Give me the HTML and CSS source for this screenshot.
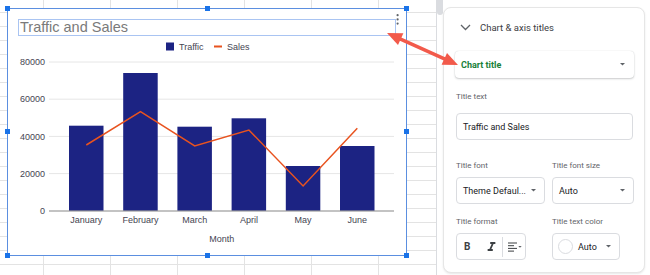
FILE: index.html
```html
<!DOCTYPE html>
<html lang="en">
<head>
    <meta charset="UTF-8">
    <title>Chart editor</title>
    <link rel="stylesheet" href="styles.css">
</head>
<body>
    <div class="sheet">
        <div class="chart">
            <svg class="plot" viewBox="8 9 398 246" width="398" height="246">
                <rect class="title-box" x="18.5" y="19.5" width="377" height="16"/>
                <text class="title" x="20" y="32">Traffic and Sales</text>
                <circle class="dot" cx="397.6" cy="15.2" r="1.1"/>
                <circle class="dot" cx="397.6" cy="19.4" r="1.1"/>
                <circle class="dot" cx="397.6" cy="23.6" r="1.1"/>

                <rect class="bar" x="166" y="42.5" width="8" height="8"/>
                <text class="lbl" x="179" y="50">Traffic</text>
                <rect class="sales-key" x="214" y="45.5" width="8" height="2"/>
                <text class="lbl" x="227" y="50">Sales</text>

                <line class="grid" x1="49" y1="62" x2="394" y2="62"/>
                <line class="grid" x1="49" y1="99.2" x2="394" y2="99.2"/>
                <line class="grid" x1="49" y1="136.4" x2="394" y2="136.4"/>
                <line class="grid" x1="49" y1="173.6" x2="394" y2="173.6"/>

                <text class="lbl end" x="45" y="65.2">80000</text>
                <text class="lbl end" x="45" y="102.4">60000</text>
                <text class="lbl end" x="45" y="139.6">40000</text>
                <text class="lbl end" x="45" y="176.8">20000</text>
                <text class="lbl end" x="45" y="214">0</text>

                <rect class="bar" x="69" y="125.7" width="34.5" height="85.1"/>
                <rect class="bar" x="123.2" y="73" width="34.5" height="137.8"/>
                <rect class="bar" x="177.4" y="126.7" width="34.5" height="84.1"/>
                <rect class="bar" x="231.6" y="118.3" width="34.5" height="92.5"/>
                <rect class="bar" x="285.8" y="166" width="34.5" height="44.8"/>
                <rect class="bar" x="340" y="146" width="34.5" height="64.8"/>

                <line class="axis" x1="49" y1="211" x2="394" y2="211"/>

                <polyline class="sales" points="86.3,145 140.5,111.7 194.7,146 248.9,130 303.1,186 357.3,128.3"/>

                <text class="lbl mid" x="86.3" y="222.5">January</text>
                <text class="lbl mid" x="140.5" y="222.5">February</text>
                <text class="lbl mid" x="194.7" y="222.5">March</text>
                <text class="lbl mid" x="248.9" y="222.5">April</text>
                <text class="lbl mid" x="303.1" y="222.5">May</text>
                <text class="lbl mid" x="357.3" y="222.5">June</text>
                <text class="lbl mid" x="221.7" y="242">Month</text>
            </svg>
            <span class="handle h-top h-left"></span>
            <span class="handle h-top h-center"></span>
            <span class="handle h-top h-right"></span>
            <span class="handle h-middle h-left"></span>
            <span class="handle h-middle h-right"></span>
            <span class="handle h-bottom h-left"></span>
            <span class="handle h-bottom h-center"></span>
            <span class="handle h-bottom h-right"></span>
        </div>
    </div>

    <div class="sidebar">
        <div class="scroll-track"><div class="scroll-thumb"></div></div>
        <div class="card">
            <div class="section-head">
                <svg class="chevron" width="11" height="7" viewBox="0 0 11 7"><path d="M1 1 L5.5 5.5 L10 1"/></svg>
                <span>Chart &amp; axis titles</span>
            </div>

            <div class="select select-main">
                <span class="green">Chart title</span>
                <svg class="caret" width="5" height="3" viewBox="0 0 5 3"><polygon points="0,0 5,0 2.5,2.6"/></svg>
            </div>

            <div class="label label-first">Title text</div>
            <div class="field">Traffic and Sales</div>

            <div class="row row-font">
                <div class="col col-left">
                    <div class="label">Title font</div>
                    <div class="select">
                        <span>Theme Defaul...</span>
                        <svg class="caret" width="5" height="3" viewBox="0 0 5 3"><polygon points="0,0 5,0 2.5,2.6"/></svg>
                    </div>
                </div>
                <div class="col col-right">
                    <div class="label">Title font size</div>
                    <div class="select">
                        <span>Auto</span>
                        <svg class="caret" width="5" height="3" viewBox="0 0 5 3"><polygon points="0,0 5,0 2.5,2.6"/></svg>
                    </div>
                </div>
            </div>

            <div class="row row-format">
                <div class="col col-left">
                    <div class="label">Title format</div>
                    <div class="format-box">
                        <span class="bold-btn">B</span>
                        <svg class="italic-btn" width="9" height="9" viewBox="6 4 12 14"><path d="M10 4v3h2.21l-3.42 8H6v3h8v-3h-2.21l3.42-8H18V4z"/></svg>
                        <span class="sep"></span>
                        <svg class="align-btn" width="9" height="10" viewBox="0 0 9 10">
                            <rect x="0" y="0.5" width="9" height="1"/>
                            <rect x="0" y="3.2" width="6" height="1"/>
                            <rect x="0" y="5.9" width="9" height="1"/>
                            <rect x="0" y="8.6" width="6" height="1"/>
                        </svg>
                        <svg class="caret small" width="4" height="2" viewBox="0 0 5 3"><polygon points="0,0 5,0 2.5,2.6"/></svg>
                    </div>
                </div>
                <div class="col col-right">
                    <div class="label">Title text color</div>
                    <div class="color-box">
                        <span class="swatch"></span>
                        <span class="color-name">Auto</span>
                        <svg class="caret" width="5" height="3" viewBox="0 0 5 3"><polygon points="0,0 5,0 2.5,2.6"/></svg>
                    </div>
                </div>
            </div>
        </div>
    </div>

    <svg class="arrow" width="650" height="275" viewBox="0 0 650 275">
        <line x1="400" y1="38.9" x2="445" y2="59.1"/>
        <polygon points="387,33 398,45.1 403.4,33.3"/>
        <polygon points="458,65 441.6,64.7 447,52.9"/>
    </svg>
</body>
</html>
```

FILE: styles.css
```css
* {
    box-sizing: border-box;
}

body {
    margin: 0;
    width: 650px;
    height: 275px;
    overflow: hidden;
    display: flex;
    position: relative;
    background: #fff;
    font-family: Roboto, "Liberation Sans", sans-serif;
}

/* spreadsheet grid behind the chart */
.sheet {
    width: 437px;
    height: 275px;
    flex-shrink: 0;
    padding: 8px 0 0 7px;
    border-right: 1px solid #dadce0;
    background-color: #fff;
    background-image:
        linear-gradient(to right, #e3e3e3 1px, transparent 1px),
        linear-gradient(to bottom, #e3e3e3 1px, transparent 1px);
    background-size: 67px 100%, 100% 14px;
    background-position: 43px 0, 0 12px;
}

.chart {
    position: relative;
    width: 400px;
    height: 248px;
    border: 1px solid #5b8fe0;
    background: #fff;
}

.plot {
    display: block;
    font-family: "Liberation Sans", Arial, sans-serif;
}

.title-box {
    fill: none;
    stroke: #a9c4f2;
    stroke-width: 1;
}

.title {
    font-size: 14.5px;
    fill: #7a7a7a;
}

.dot {
    fill: #5f6368;
}

.lbl {
    font-size: 9px;
    fill: #454552;
}

.end {
    text-anchor: end;
}

.mid {
    text-anchor: middle;
}

.grid {
    stroke: #e6e6e6;
    stroke-width: 1;
}

.axis {
    stroke: #888;
    stroke-width: 1.2;
}

.bar {
    fill: #1c2383;
}

.sales-key {
    fill: #e8531f;
}

.sales {
    fill: none;
    stroke: #e8531f;
    stroke-width: 1.5;
}

.handle {
    position: absolute;
    width: 5px;
    height: 5px;
    background: #1a73e8;
}

.h-top { top: -3px; }
.h-middle { top: 120px; }
.h-bottom { top: 244px; }
.h-left { left: -3px; }
.h-center { left: 197px; }
.h-right { left: 396px; }

/* side panel */
.sidebar {
    width: 213px;
    display: flex;
}

.scroll-track {
    width: 6px;
    flex-shrink: 0;
}

.scroll-thumb {
    width: 6px;
    height: 15px;
    background: #dadce0;
    border-radius: 0 0 3px 3px;
}

.card {
    width: 202px;
    height: 266px;
    margin-top: 7px;
    padding: 0 11px 0 12px;
    border: 1px solid #e6e6e6;
    border-radius: 8px;
    box-shadow: 0 1px 2px rgba(60, 64, 67, 0.12);
    background: #fff;
}

.section-head {
    display: flex;
    align-items: center;
    height: 14px;
    margin-top: 12px;
    font-size: 9.5px;
    color: #3c4043;
}

.chevron {
    margin-left: 4px;
    margin-right: 9px;
}

.chevron path {
    fill: none;
    stroke: #5f6368;
    stroke-width: 1.3;
}

.caret polygon {
    fill: #5f6368;
}

.select {
    display: flex;
    align-items: center;
    justify-content: space-between;
    height: 27px;
    margin-top: 5px;
    padding: 0 8px 0 6px;
    border: 1px solid #dadce0;
    border-radius: 4px;
    font-size: 9px;
    color: #202124;
}

.select-main {
    margin-top: 17px;
    margin-left: -1px;
    margin-right: -1px;
    padding: 0 9px 0 6px;
    border: none;
    box-shadow: 0 1px 2px rgba(60, 64, 67, 0.25), 0 0 1px rgba(60, 64, 67, 0.2);
}

.green {
    color: #188038;
    font-weight: bold;
}

.label {
    height: 12px;
    line-height: 12px;
    font-size: 8px;
    color: #5f6368;
}

.label-first {
    margin-top: 13px;
}

.field {
    height: 27px;
    margin-top: 10px;
    padding-left: 6px;
    display: flex;
    align-items: center;
    border: 1px solid #dadce0;
    border-radius: 4px;
    font-size: 9px;
    color: #202124;
}

.row {
    display: flex;
    gap: 7px;
}

.row-font {
    margin-top: 20px;
}

.row-format {
    margin-top: 12px;
}

.col-left {
    width: 89px;
}

.col-right {
    width: 81px;
}

.col-right .select {
    width: 82px;
}

.format-box {
    width: 70px;
    height: 27px;
    margin-top: 5px;
    display: flex;
    align-items: center;
    padding-left: 7px;
    border: 1px solid #dadce0;
    border-radius: 4px;
}

.bold-btn {
    font-size: 10px;
    font-weight: bold;
    color: #3c4043;
    width: 23px;
}

.italic-btn path,
.align-btn rect {
    fill: #3c4043;
}

.sep {
    width: 1px;
    height: 20px;
    margin: 0 5px 0 6px;
    background: #dadce0;
}

.caret.small {
    margin-left: 1px;
}

.color-box {
    width: 68px;
    height: 27px;
    margin-top: 5px;
    display: flex;
    align-items: center;
    padding-left: 5px;
    border: 1px solid #dadce0;
    border-radius: 4px;
    font-size: 9px;
    color: #202124;
}

.swatch {
    width: 15px;
    height: 15px;
    border: 1px solid #dadce0;
    border-radius: 50%;
}

.color-name {
    margin: 0 9px 0 5px;
}

/* pointer arrow drawn over the page */
.arrow {
    position: absolute;
    left: 0;
    top: 0;
    pointer-events: none;
}

.arrow line {
    stroke: #f25a4b;
    stroke-width: 3.5;
}

.arrow polygon {
    fill: #f25a4b;
}
```
